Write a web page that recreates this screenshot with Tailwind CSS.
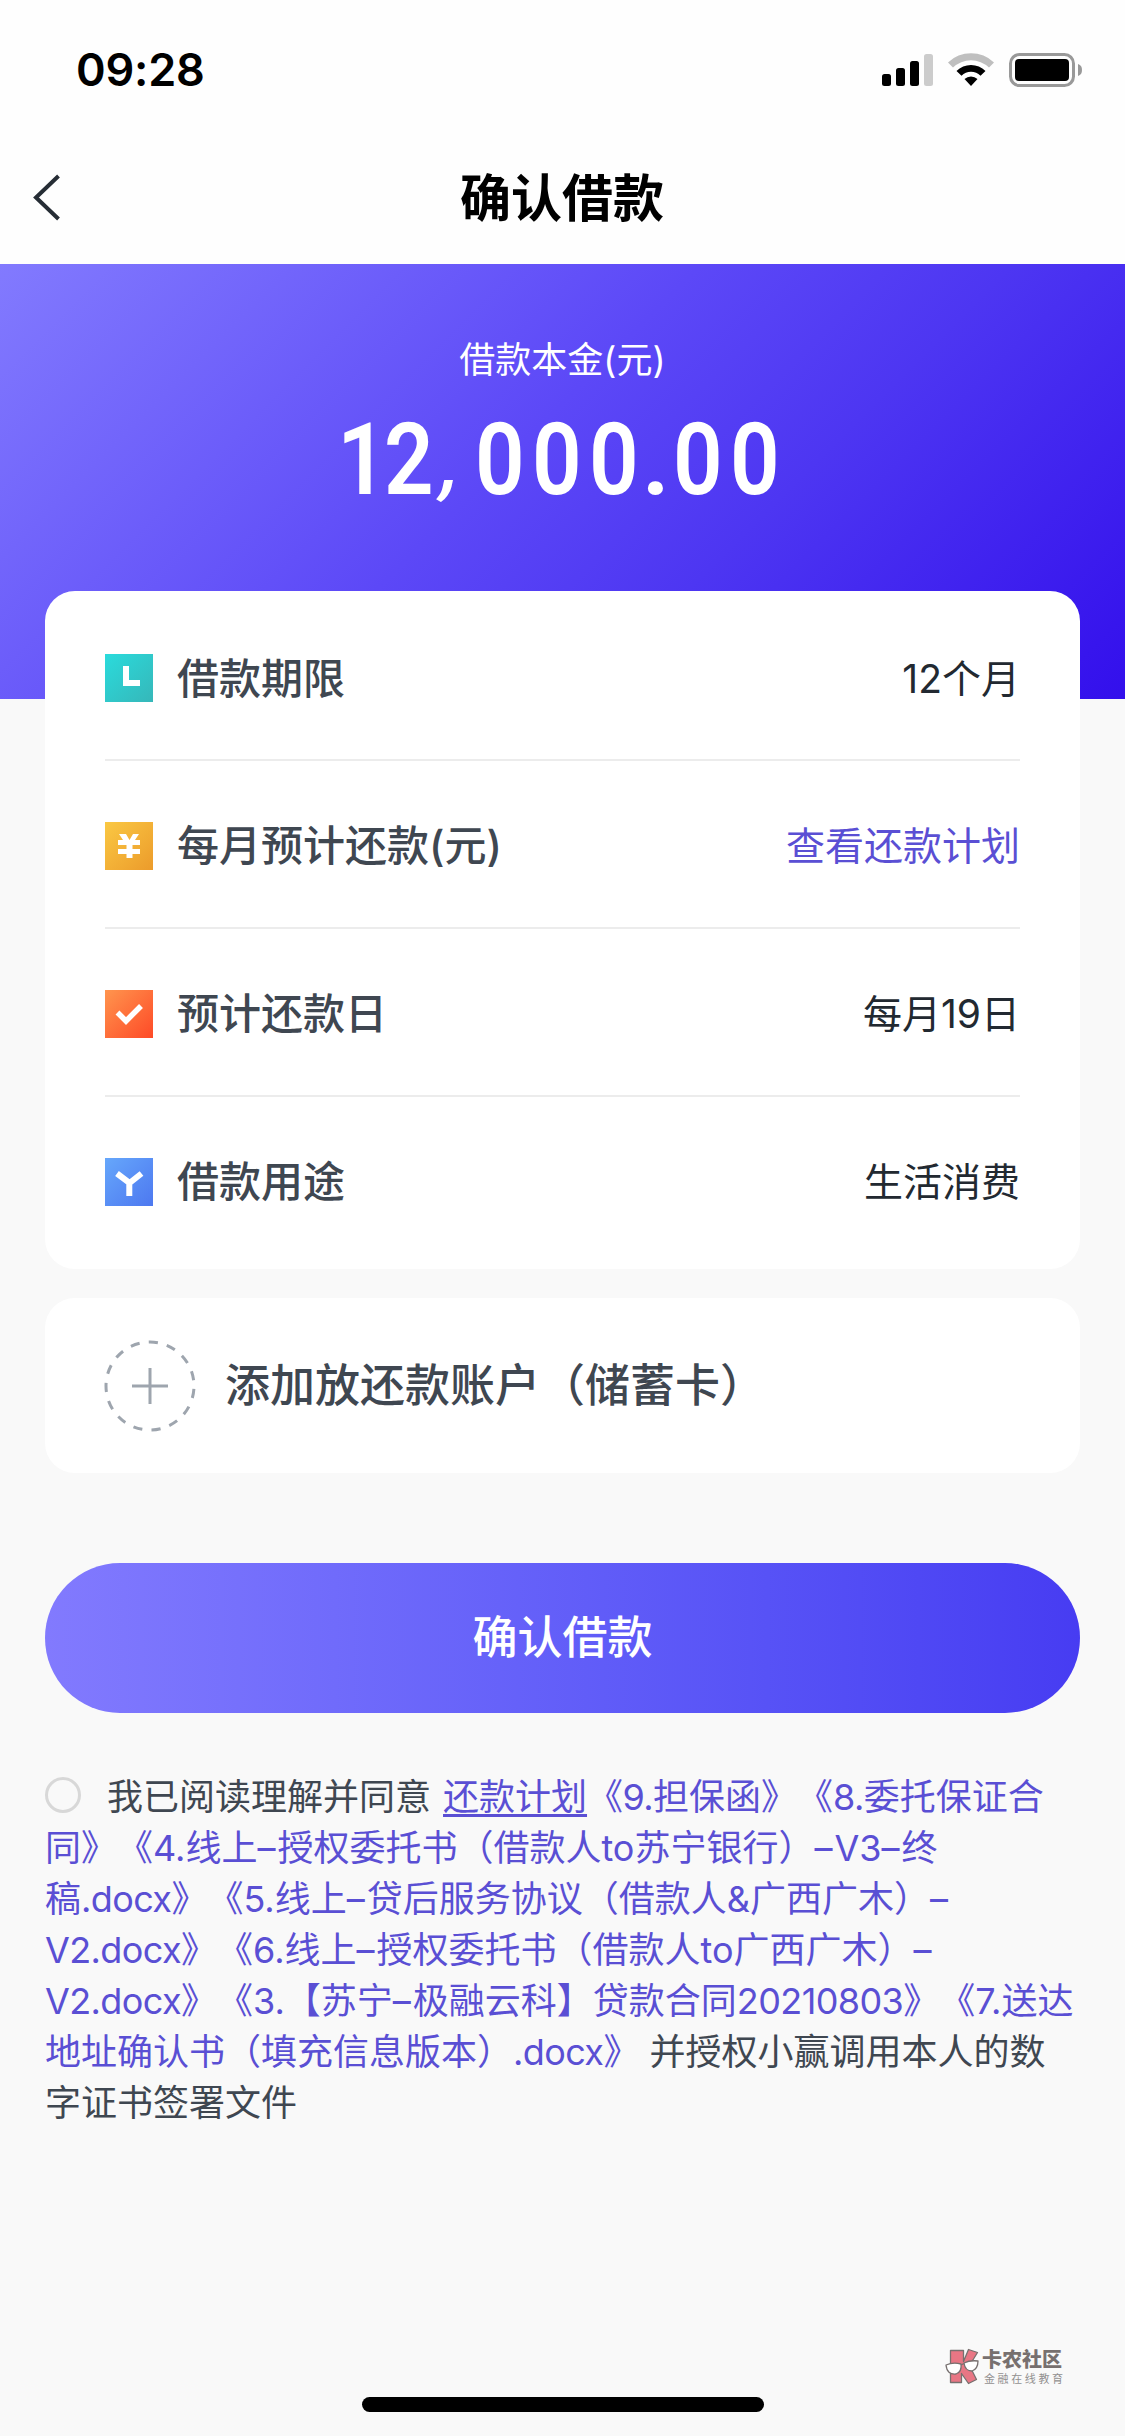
<!DOCTYPE html>
<html lang="zh-CN">
<head>
<meta charset="utf-8">
<title>确认借款</title>
<script src="https://cdn.jsdelivr.net/npm/@tailwindcss/browser@4"></script>
</head>
<body class="w-[1125px] h-[2436px] bg-[#f9f9f9] overflow-hidden relative flex flex-col font-['Inter','Noto_Sans_CJK_SC',sans-serif] text-[#3f4751]">
<header class="bg-[#fefefe] h-[264px] shrink-0">
  <div class="h-[132px] flex items-center justify-between pl-[76px] pr-[43px] pt-[7px]">
    <div class="text-[45px] leading-none font-semibold text-black tracking-[-0.2px]">09:28</div>
    <svg class="w-[202px] h-[38px]" viewBox="880 50 202 38">
      <g fill="#000"><rect x="882" y="73" width="9" height="12" rx="2.5"/><rect x="896" y="67" width="9" height="18" rx="2.5"/><rect x="910" y="60" width="9" height="25" rx="2.5"/></g>
      <rect x="924" y="53" width="9" height="32" rx="2.5" fill="#ccc"/>
      <path d="M948 61.500A33 33 0 0 1 994 61.500L989 66.500A26 26 0 0 0 953 66.500Z" fill="#bfbfbf"/>
      <path d="M956.500 70A20.500 20.500 0 0 1 985.500 70L980.500 74.700A13.500 13.500 0 0 0 961.500 74.700ZM964.500 78A9.500 9.500 0 0 1 977.500 78L971 85Z"/>
      <rect x="1010.500" y="53.500" width="63" height="31" rx="9" fill="none" stroke="#999" stroke-width="3"/>
      <rect x="1015" y="58" width="54" height="22" rx="4"/>
      <path d="M1078 63c3 1 4 3 4 6s-1 5-4 6z" fill="#999"/>
    </svg>
  </div>
  <div class="h-[132px] relative flex items-center justify-center">
    <svg class="absolute left-[30px] top-[41px] w-8 h-12" viewBox="0 0 32 48" fill="none" stroke="#262d35" stroke-width="4"><path d="M28.500 3L6 24.500L28.500 46"/></svg>
    <h1 class="text-[51px] leading-none font-bold text-black pr-px">确认借款</h1>
  </div>
</header>
<section class="h-[435px] shrink-0 bg-[linear-gradient(135deg,#827afe_0%,#5c48f7_45%,#4d36f2_65%,#330fec_100%)] text-white flex flex-col items-center pt-[71px]">
  <div class="text-[36px] leading-[50px]">借款本金(元)</div>
  <div class="flex text-[101px] leading-[100px] mt-[25px] pr-[20px] font-['Roboto',sans-serif] font-semibold text-center [&>b]:w-[57px] [&>b]:font-semibold [&>b]:scale-x-[0.86]"><b class="pl-3">1</b><b>2</b><i class="w-[34px] -skew-x-12 not-italic text-[78px] pt-[3px] pr-1">,</i><b>0</b><b>0</b><b>0</b><i class="w-[27px] not-italic">.</i><b>0</b><b>0</b></div>
</section>
<main class="px-[45px] -mt-[108px] flex flex-col">
  <section class="bg-white rounded-[30px] h-[678px] px-[60px]">
    <div class="h-[170px] border-b-2 border-[#ececec] flex items-center pt-[6px]">
      <svg class="w-12 h-12" viewBox="0 0 48 48"><defs><linearGradient id="a" x2="1" y2="1"><stop stop-color="#2adbdc"/><stop offset="1" stop-color="#36b7b9"/></linearGradient></defs><path fill="url(#a)" d="M0 0h48v48H0z"/><path d="M18 12h6v14h11v6H18z" fill="#fff"/></svg>
      <span class="ml-6 text-[42px] leading-none font-medium mt-px">借款期限</span><span class="ml-auto text-[39px] leading-none text-[#222931]">12个月</span>
    </div>
    <div class="h-[168px] border-b-2 border-[#ececec] flex items-center pt-[3px]">
      <svg class="w-12 h-12" viewBox="0 0 48 48"><defs><linearGradient id="b" x2="1" y2="1"><stop stop-color="#fac843"/><stop offset="1" stop-color="#ec9b2b"/></linearGradient></defs><path fill="url(#b)" d="M0 0h48v48H0z"/><path d="M14 12h7l3.500 6 3.500-6h6l-4 6h5v5H13v-5h5zM13 27h22v5h-7.500v4h-6v-4H13zM21.500 22h6v6h-6z" fill="#fff"/></svg>
      <span class="ml-6 text-[42px] leading-none font-medium mt-px">每月预计还款(元)</span><span class="ml-auto text-[39px] leading-none text-[#5a4fd4]">查看还款计划</span>
    </div>
    <div class="h-[168px] border-b-2 border-[#ececec] flex items-center pt-[3px]">
      <svg class="w-12 h-12" viewBox="0 0 48 48"><defs><linearGradient id="c" x2="1" y2="1"><stop stop-color="#ff954e"/><stop offset="1" stop-color="#fe4a27"/></linearGradient></defs><path fill="url(#c)" d="M0 0h48v48H0z"/><path d="M12.500 22.500l8.500 8.500L36 16" stroke="#fff" stroke-width="5.500" fill="none"/></svg>
      <span class="ml-6 text-[42px] leading-none font-medium mt-px">预计还款日</span><span class="ml-auto text-[39px] leading-none text-[#222931]">每月19日</span>
    </div>
    <div class="h-[168px] flex items-center pt-px">
      <svg class="w-12 h-12" viewBox="0 0 48 48"><defs><linearGradient id="d" x2="1" y2="1"><stop stop-color="#66a7fb"/><stop offset="1" stop-color="#4d78f0"/></linearGradient></defs><path fill="url(#d)" d="M0 0h48v48H0z"/><path d="M12 15.500l12.500 9.500L36.500 15.500M24.300 24v14" stroke="#fff" stroke-width="6" fill="none"/></svg>
      <span class="ml-6 text-[42px] leading-none font-medium mt-px">借款用途</span><span class="ml-auto text-[39px] leading-none text-[#222931]">生活消费</span>
    </div>
  </section>
  <section class="mt-[29px] h-[175px] bg-white rounded-[30px] flex items-center pl-[59px]">
    <svg class="w-[92px] h-[92px]" viewBox="0 0 92 92" fill="none" stroke="#9ea5ae" stroke-width="3"><circle cx="46" cy="46" r="44" stroke-dasharray="9.200 9.230" stroke-dashoffset="-3"/><path d="M28 46h36M46 28v36"/></svg>
    <span class="ml-[29px] text-[45px] leading-none font-medium">添加放还款账户（储蓄卡）</span>
  </section>
  <button class="mt-[90px] h-[150px] rounded-full bg-linear-to-r from-[#827afe] to-[#473cf2] text-white text-[45px] leading-none font-medium pb-px">确认借款</button>
  <div class="mt-[59px] text-[36px] leading-[51px] whitespace-nowrap text-[#5a4fd4] [text-spacing-trim:space-all] [&_b]:font-normal [&_b]:tracking-[-0.6px] [&_i]:not-italic [&_i]:tracking-[2px]">
    <div class="flex items-center"><span class="w-9 h-9 rounded-full border-3 border-[#d8d8d8] mr-[26px] -mt-1.5"></span><span class="text-[#3f4751] mr-3">我已阅读理解并同意</span><span class="underline underline-offset-4">还款计划</span><span><b>《9.</b>担保函》《<b>8.</b>委托保证合</span></div>
    <div>同》《4.线上<i>–</i>授权委托书（借款人to苏宁银行）<i>–</i>V3<i>–</i>终</div>
    <div>稿<b>.docx</b>》《5.线上<i>–</i>贷后服务协议（借款人&amp;广西广木）<i>–</i></div>
    <div><b>V2.docx</b>》《6.线上<i>–</i>授权委托书（借款人to广西广木）<i>–</i></div>
    <div><b>V2.docx</b>》《3.【苏宁<i>–</i>极融云科】贷款合同<b>20210803</b>》《7.送达</div>
    <div>地址确认书（填充信息版本）<b>.docx</b>》 <span class="text-[#3f4751]">并授权小赢调用本人的数</span></div>
    <div class="text-[#3f4751]">字证书签署文件</div>
  </div>
</main>
<footer class="mt-auto pb-6 flex flex-col items-center">
  <div class="self-end mr-[61px] mb-[11px] flex items-center gap-px">
    <svg class="w-[36px] h-[38px]" viewBox="0 0 36 38" stroke="#77706f" stroke-width="1.300" stroke-linejoin="round"><path fill="#e87684" d="M5.500 2.500h13v11l5-12 9 3-8 13 7 14-8 4-7-10v9h-11z"/><g fill="#fff"><path d="M1 17q7-3 15-1 1 8-5 10-9 1-10-9zM19 15q6-3 14-2 0 8-6 10-7 0-8-8z"/></g><path fill="none" d="M16 17l3-1.500"/></svg>
    <div class="font-['Noto_Sans_CJK_SC',sans-serif]">
      <div class="text-[20px] leading-[20px] font-black text-[#77706f]">卡农社区</div>
      <div class="text-[11px] leading-[13px] mt-[3px] tracking-[2.600px] pl-[2px] w-[82px] whitespace-nowrap text-[#929090]">金融在线教育</div>
    </div>
  </div>
  <div class="w-[402px] h-[15px] rounded-full bg-black"></div>
</footer>
</body>
</html>
